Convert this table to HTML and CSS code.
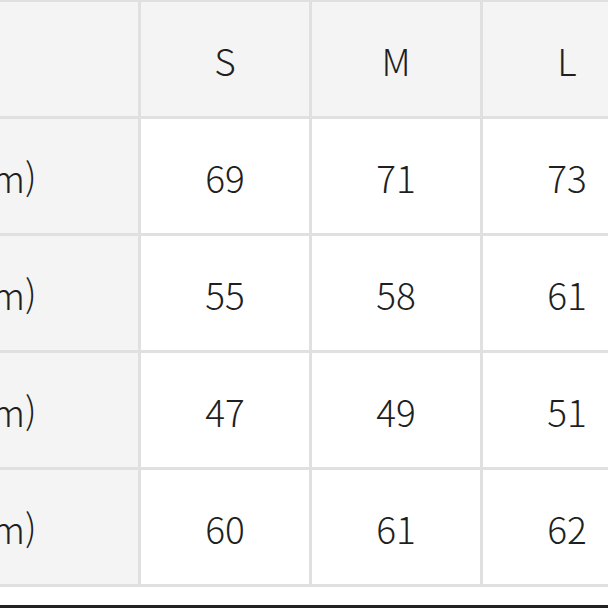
FILE: index.html
```html
<!DOCTYPE html>
<html lang="ko">
<head>
<meta charset="utf-8">
<link rel="stylesheet" href="styles.css">
</head>
<body>
<div class="viewport">
  <div class="size-table">
    <div class="cell head label"></div>
    <div class="cell head">S</div>
    <div class="cell head">M</div>
    <div class="cell head">L</div>

    <div class="cell label">총장(cm)</div>
    <div class="cell">69</div>
    <div class="cell">71</div>
    <div class="cell">73</div>

    <div class="cell label">가슴(cm)</div>
    <div class="cell">55</div>
    <div class="cell">58</div>
    <div class="cell">61</div>

    <div class="cell label">어깨(cm)</div>
    <div class="cell">47</div>
    <div class="cell">49</div>
    <div class="cell">51</div>

    <div class="cell label">소매(cm)</div>
    <div class="cell">60</div>
    <div class="cell">61</div>
    <div class="cell">62</div>
  </div>
  <div class="footer-rule"></div>
</div>
</body>
</html>
```

FILE: styles.css
```css
html, body {
  margin: 0;
  padding: 0;
  background: #ffffff;
}

.viewport {
  width: 608px;
  height: 608px;
  overflow: hidden;
  display: flex;
  flex-direction: column;
}

.size-table {
  display: grid;
  grid-template-columns: 346px 168px 168px 168px;
  grid-auto-rows: 114px;
  gap: 3px;
  padding: 3px 0;
  margin-top: -1px;
  margin-left: -208px;
  width: max-content;
  background: #e0e0e0;
}

.cell {
  background: #ffffff;
  display: flex;
  align-items: center;
  justify-content: center;
  font-family: "Noto Sans CJK KR", "Noto Sans", sans-serif;
  font-size: 37px;
  font-weight: 300;
  color: #1f1f1f;
  padding-top: 2px;
  box-sizing: border-box;
}

.head,
.label {
  background: #f4f4f4;
}

.footer-rule {
  margin-top: 18px;
  height: 3px;
  background: #222222;
}
```
